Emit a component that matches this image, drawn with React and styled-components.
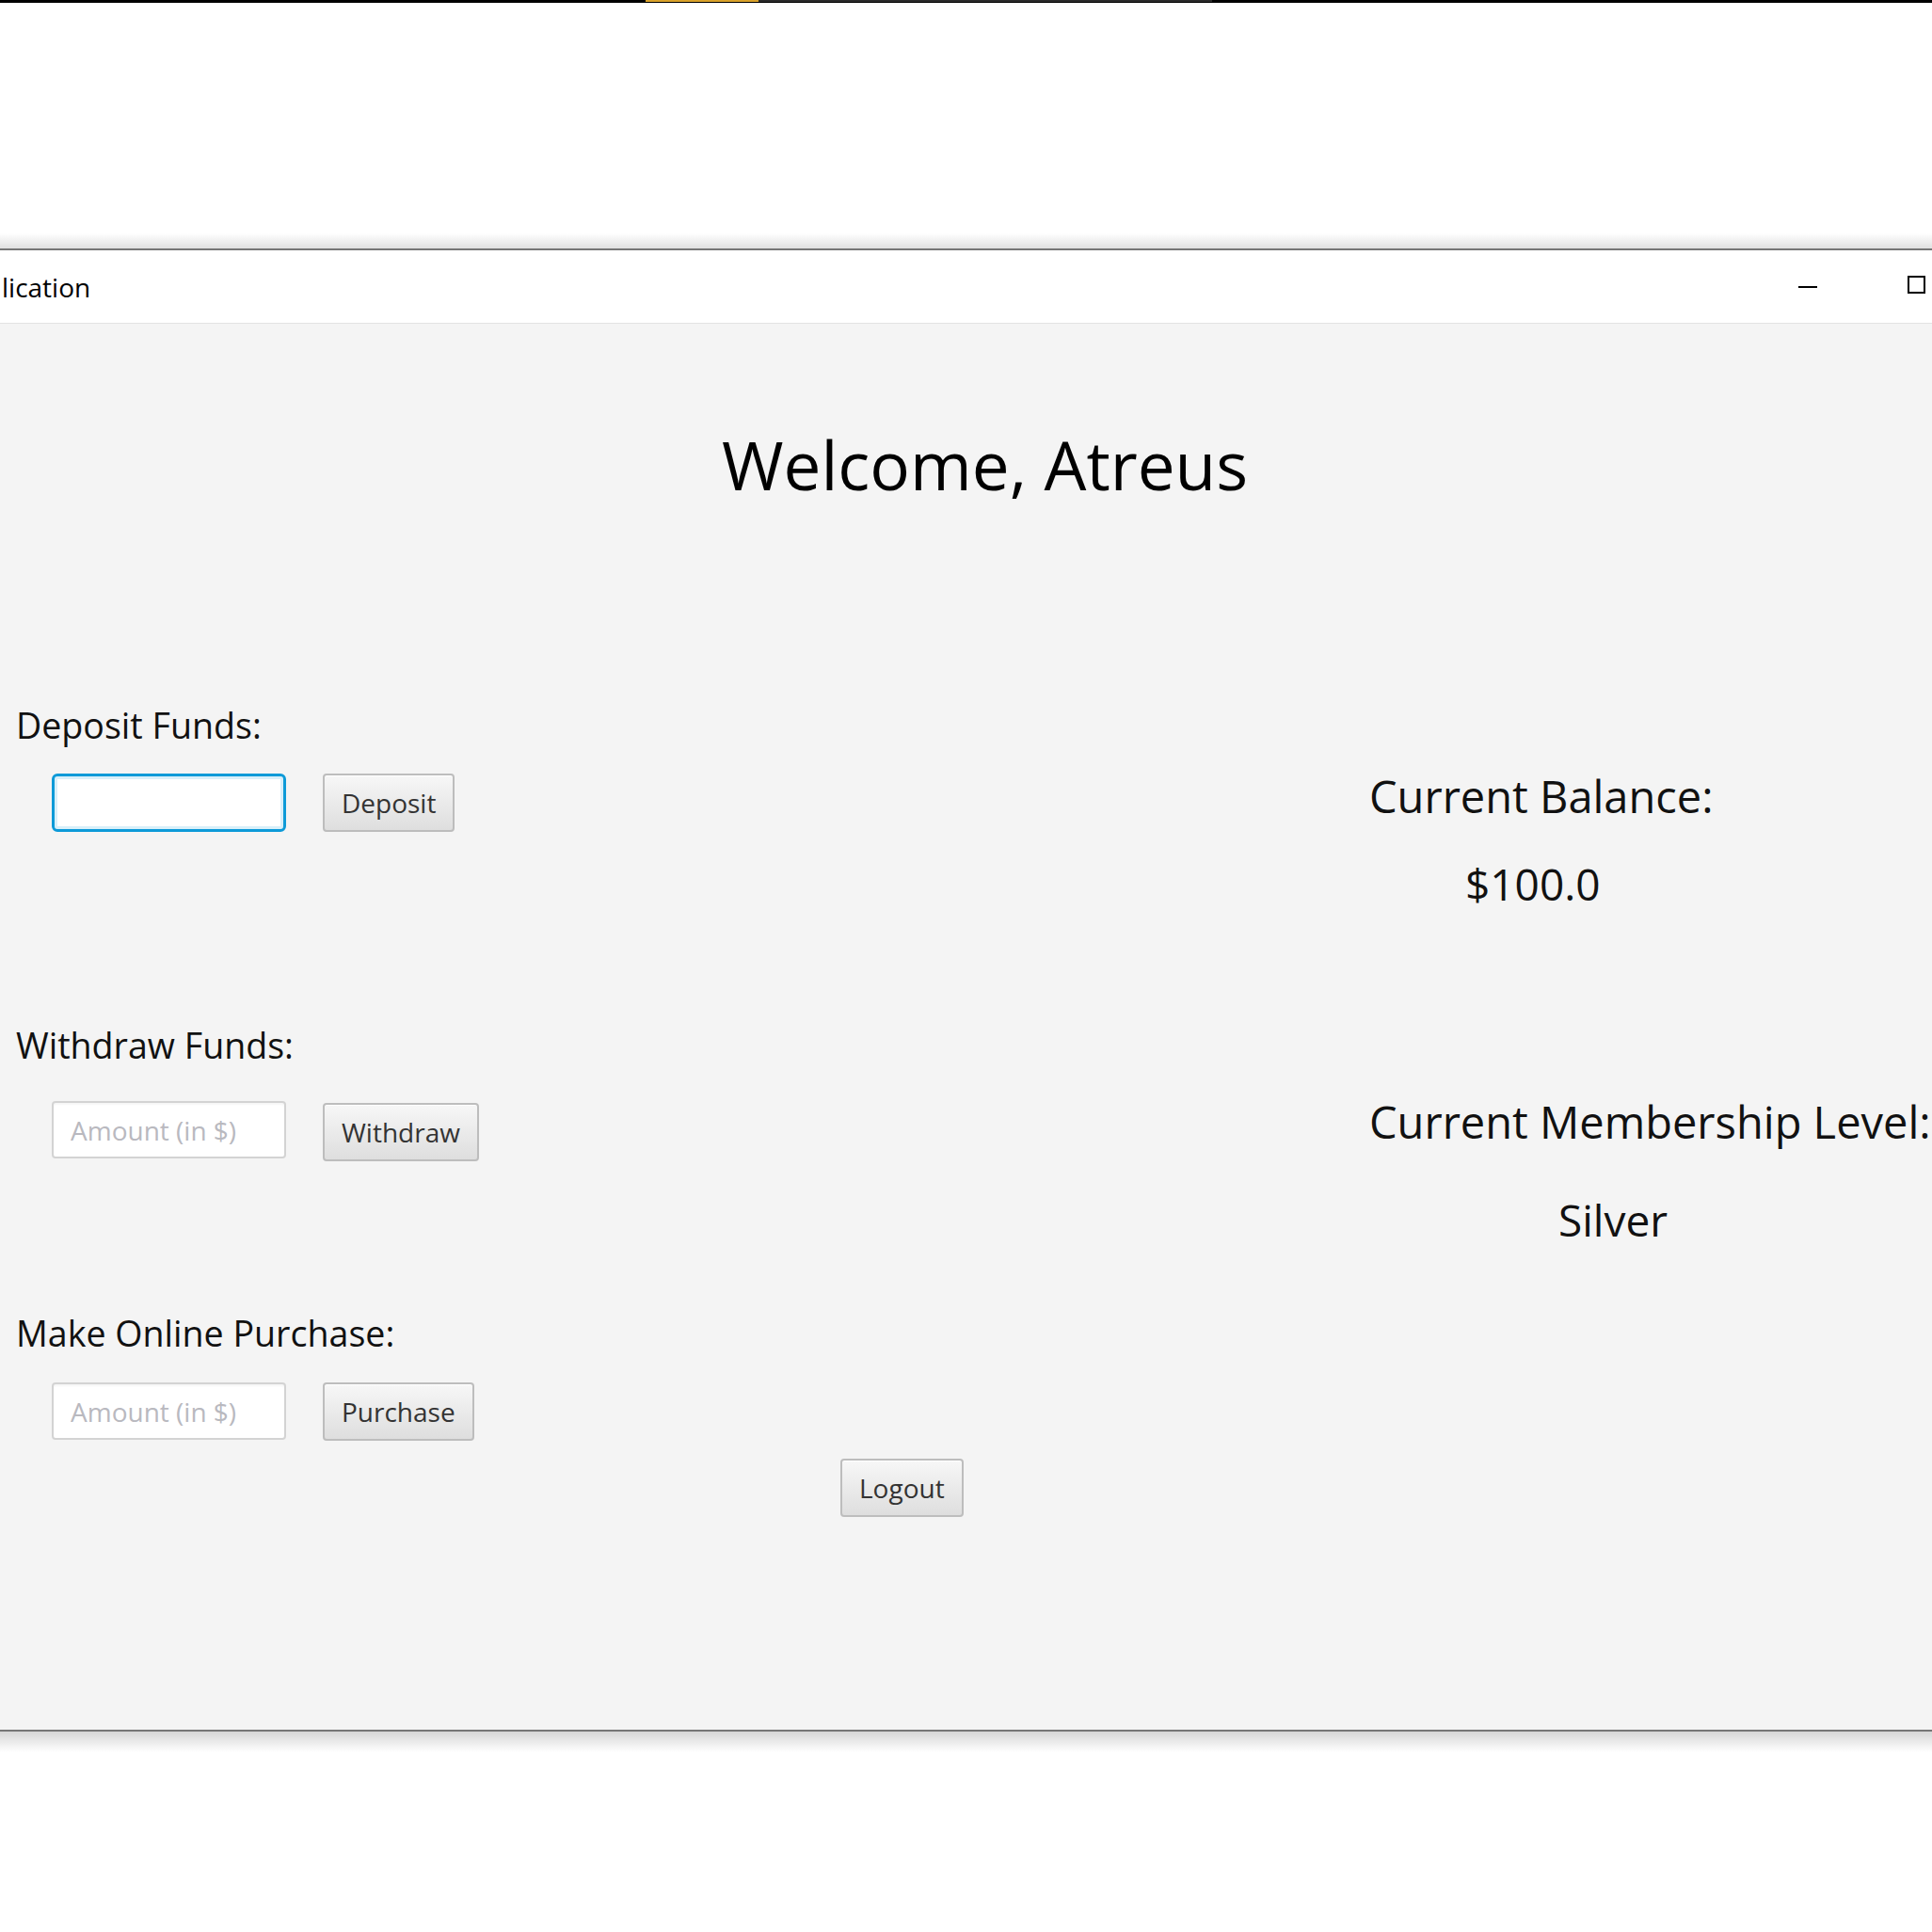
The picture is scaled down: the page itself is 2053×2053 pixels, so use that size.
import styled, { createGlobalStyle } from 'styled-components'

const Global = createGlobalStyle`
  html, body { margin: 0; padding: 0; background: #fff; }
  body { font-family: 'Open Sans', 'Noto Sans', sans-serif; color: #111; }
  * { box-sizing: border-box; }
`

const Page = styled.div` width: 2053px; min-height: 2053px; background: #fff; overflow: hidden; `

// top strip (taskbar edge of the other screen)
const TopStrip = styled.div` display: flex; height: 3px; background: #000; `
const StripSeg = styled.div`
  height: 2px; width: ${(p) => p.$w}px; background: ${(p) => p.$c || 'transparent'};
`

const ShadowTop = styled.div`
  height: 16px; margin-top: 245px;
  background: linear-gradient(to bottom, rgba(0,0,0,0), rgba(0,0,0,.12));
`
const ShadowBottom = styled.div`
  height: 22px;
  background: linear-gradient(to bottom, rgba(0,0,0,.16), rgba(0,0,0,0));
`

// window
const Window = styled.div` border-top: 2px solid #767676; border-bottom: 2px solid #767676; `
const TitleBar = styled.div`
  height: 78px; background: #fff; border-bottom: 1px solid #e3e3e3;
  display: flex; align-items: center; justify-content: space-between; padding: 0 7px 0 2px;
`
const TitleText = styled.span` font-size: 28px; line-height: 1; color: #000; margin-top: 1px; `
const Controls = styled.div` display: flex; align-items: center; gap: 96px; `
const MinIcon = styled.span` display: block; width: 20px; height: 2px; background: #000; `
const MaxIcon = styled.span` display: block; width: 19px; height: 19px; border: 2px solid #000; margin-top: -4px; `

const Content = styled.div` height: 1494px; background: #f4f4f4; padding-top: 114px; `

const Welcome = styled.h1`
  margin: 0; padding-left: 40px; text-align: center;
  font-weight: 400; font-size: 71px; line-height: 1; color: #000;
`

const Main = styled.div` display: grid; grid-template-columns: 1438px 1fr; margin-top: 223px; padding-left: 17px; `

const LeftCol = styled.div` display: flex; flex-direction: column; `
const Label = styled.div`
  font-size: 37.6px; line-height: 37px; height: 37px; color: #111; margin-top: ${(p) => p.$mt || 0}px;
`
const FormRow = styled.div`
  display: flex; align-items: flex-start; gap: 39px; padding-left: 38px; margin-top: ${(p) => p.$mt || 0}px;
`
const Field = styled.input`
  width: 249px; height: ${(p) => (p.$focused ? 62 : 61)}px; padding: 0 0 0 18px;
  font-family: inherit; font-size: 28px; color: #333; background: #fff; outline: none;
  border: ${(p) => (p.$focused ? '3px solid #0d9ad8' : '2px solid #d3d3d3')};
  border-radius: ${(p) => (p.$focused ? 6 : 4)}px;
  box-shadow: ${(p) => (p.$focused ? 'inset 0 0 0 3px #d8eff9' : 'inset 0 2px 2px rgba(0,0,0,.04)')};
  &::placeholder { color: #b9b9bf; }
`
const Button = styled.button`
  height: 62px; padding: 0 18px; font-family: inherit; font-size: 28px; color: #333;
  background: linear-gradient(to bottom, #f7f7f7, #dedede);
  border: 2px solid #bdbdbd; border-radius: 4px; cursor: pointer;
  box-shadow: inset 0 1px 0 #fff;
  margin-top: ${(p) => p.$mt || 0}px; margin-left: ${(p) => p.$ml || 0}px; align-self: flex-start;
`

const RightCol = styled.div` display: flex; flex-direction: column; padding-top: 71px; `
const InfoTitle = styled.div` font-size: 47px; line-height: 1; color: #111; margin-top: ${(p) => p.$mt || 0}px; `
const InfoValue = styled.div`
  font-size: 46px; line-height: 1; color: #111; margin-top: ${(p) => p.$mt}px; padding-left: ${(p) => p.$indent}px;
`

export default function App() {
  return (
    <Page>
      <Global />
      <TopStrip>
        <StripSeg $w={686} />
        <StripSeg $w={120} $c="#d9a22b" />
        <StripSeg $w={482} $c="#2a2a2a" />
      </TopStrip>
      <ShadowTop />
      <Window>
        <TitleBar>
          <TitleText>lication</TitleText>
          <Controls>
            <MinIcon />
            <MaxIcon />
          </Controls>
        </TitleBar>
        <Content>
          <Welcome>Welcome, Atreus</Welcome>
          <Main>
            <LeftCol>
              <Label>Deposit Funds:</Label>
              <FormRow $mt={33}>
                <Field $focused />
                <Button>Deposit</Button>
              </FormRow>

              <Label $mt={208}>Withdraw Funds:</Label>
              <FormRow $mt={41}>
                <Field placeholder="Amount (in $)" />
                <Button $mt={2}>Withdraw</Button>
              </FormRow>

              <Label $mt={164}>Make Online Purchase:</Label>
              <FormRow $mt={34}>
                <Field placeholder="Amount (in $)" />
                <Button>Purchase</Button>
              </FormRow>
              <Button $ml={876} $mt={19}>Logout</Button>
            </LeftCol>

            <RightCol>
              <InfoTitle>Current Balance:</InfoTitle>
              <InfoValue $mt={46} $indent={102}>$100.0</InfoValue>
              <InfoTitle $mt={207}>Current Membership Level:</InfoTitle>
              <InfoValue $mt={57} $indent={201}>Silver</InfoValue>
            </RightCol>
          </Main>
        </Content>
      </Window>
      <ShadowBottom />
    </Page>
  )
}
